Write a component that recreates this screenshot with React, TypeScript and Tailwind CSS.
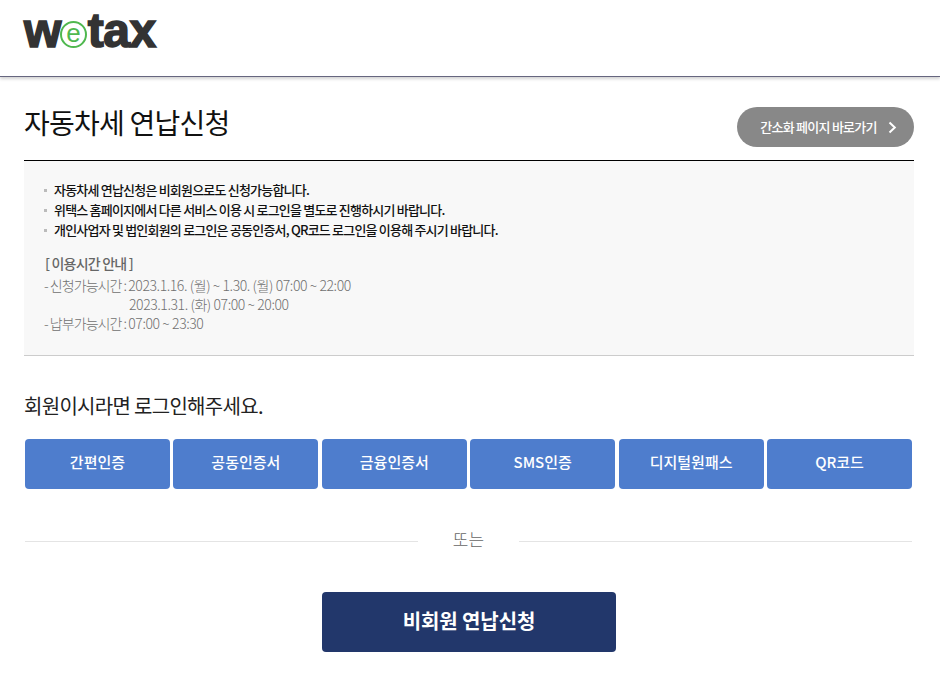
const KO = "font-['Noto_Sans_CJK_KR','Noto_Sans',sans-serif]"

const notices = [
  '자동차세 연납신청은 비회원으로도 신청가능합니다.',
  '위택스 홈페이지에서 다른 서비스 이용 시 로그인을 별도로 진행하시기 바랍니다.',
  '개인사업자 및 법인회원의 로그인은 공동인증서, QR코드 로그인을 이용해 주시기 바랍니다.',
]

const loginTypes = ['간편인증', '공동인증서', '금융인증서', 'SMS인증', '디지털원패스', 'QR코드']

function Logo() {
  return (
    <div className="flex items-center h-[36px] font-['Liberation_Sans',sans-serif] font-bold text-[48px] leading-none text-[#333333] tracking-[-0.5px] [-webkit-text-stroke:1.6px_#333333]">
      <span>w</span>
      <span className="flex items-center justify-center w-[27px] h-[27px] mt-[6px] -ml-[1px] mr-[1px] rounded-full border-[2px] border-[#4fb84f] bg-white text-[26px] font-normal text-[#4fb84f] [-webkit-text-stroke:0px] pb-[3px]">
        e
      </span>
      <span>tax</span>
    </div>
  )
}

export default function App() {
  return (
    <div className={`${KO} w-[940px] h-[698px] bg-white overflow-hidden`}>
      {/* Header */}
      <header className="h-[77px] pl-[24px] pt-[13px] border-b border-[#66667f] shadow-[0_2px_3px_rgba(0,0,0,0.18)]">
        <Logo />
      </header>

      <main className="pl-[24px] pr-[26px]">
        {/* Title */}
        <div className="flex items-start justify-between h-[84px] pt-[30px] border-b border-black">
          <h1 className="mt-[-1px] text-[28px] leading-[32px] tracking-[-0.75px] text-[#111111] font-normal">자동차세 연납신청</h1>
          <a className="flex items-center justify-center gap-[10px] w-[177px] h-[40px] pl-[6px] rounded-full bg-[#888888] text-white text-[13px] font-medium tracking-[-0.75px]">
            간소화 페이지 바로가기
            <svg width="9" height="13" viewBox="0 0 9 13" fill="none" className="ml-[1px]">
              <path d="M1.5 1.5 L6.8 6.5 L1.5 11.5" stroke="white" strokeWidth="2" />
            </svg>
          </a>
        </div>

        {/* Notice */}
        <section className="h-[195px] bg-[#f8f8f8] border-b border-[#cccccc] pt-[19px] pl-[20px]">
          <ul className="flex flex-col text-[13px] leading-[20px] font-medium tracking-[-0.8px] text-[#111111]">
            {notices.map((text) => (
              <li key={text} className="flex items-center">
                <span className="w-[3px] h-[3px] bg-[#bbbbbb] mr-[7px]" />
                {text}
              </li>
            ))}
          </ul>
          <p className="mt-[13px] ml-[1px] text-[14px] leading-[20px] font-medium tracking-[-0.8px] text-[#666666]">[ 이용시간 안내 ]</p>
          <div className="mt-[3px] text-[14px] leading-[19px] tracking-[-0.42px] text-[#707070] font-light">
            <p><span className="tracking-[-0.95px]">- 신청가능시간 : </span>2023.1.16. (월) ~ 1.30. (월) 07:00 ~ 22:00</p>
            <p className="pl-[85px]">2023.1.31. (화) 07:00 ~ 20:00</p>
            <p><span className="tracking-[-0.95px]">- 납부가능시간 : </span>07:00 ~ 23:30</p>
          </div>
        </section>

        {/* Login */}
        <h2 className="mt-[36px] text-[20px] leading-[28px] tracking-[-0.7px] text-[#222222] font-normal">회원이시라면 로그인해주세요.</h2>
        <div className="mt-[19px] ml-[1px] grid grid-cols-6 gap-x-[3.5px] w-[887px]">
          {loginTypes.map((label) => (
            <button key={label} className="h-[50px] pb-[3px] rounded-[4px] bg-[#4e7dcd] text-white text-[15px] font-medium">
              {label}
            </button>
          ))}
        </div>

        {/* Divider */}
        <div className="mt-[40px] ml-[1px] flex items-center w-[887px] h-[24px]">
          <div className="w-[393px] h-px bg-[#e4e4e4]" />
          <span className="w-[101px] pb-[5px] text-center text-[17px] leading-none text-[#666666] font-light">또는</span>
          <div className="flex-1 h-px bg-[#e4e4e4]" />
        </div>

        {/* Guest */}
        <div className="mt-[39px] ml-[298px]">
          <button className="w-[294px] h-[60px] pb-[2px] rounded-[4px] bg-[#22376b] text-white text-[20px] font-bold tracking-[-0.1px]">
            비회원 연납신청
          </button>
        </div>
      </main>
    </div>
  )
}
